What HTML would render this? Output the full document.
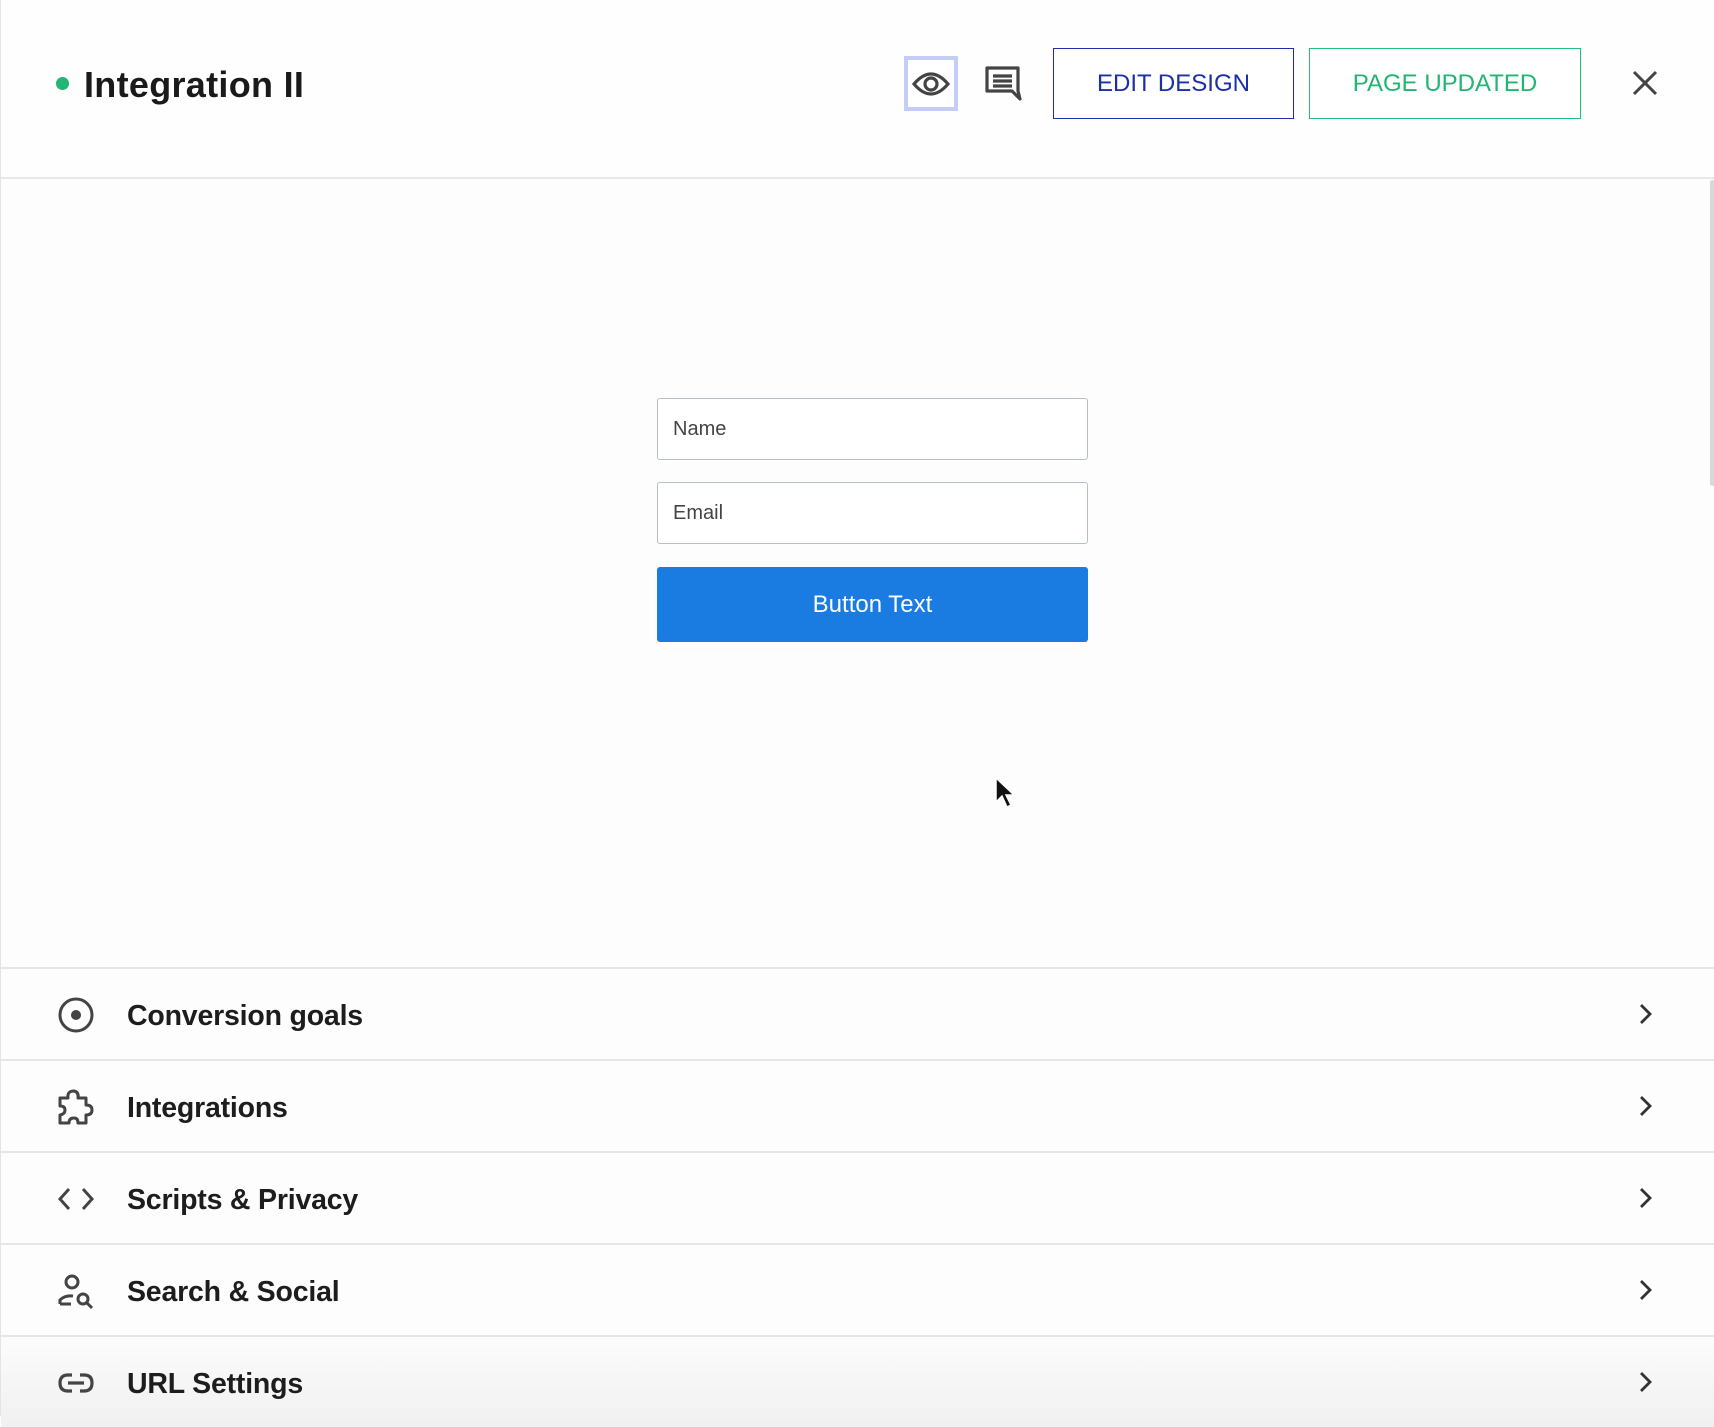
<!DOCTYPE html>
<html><head><meta charset="utf-8"><style>
*{margin:0;padding:0;box-sizing:border-box}
body{width:1714px;height:1416px;overflow:hidden;background:#fdfdfd;font-family:"Liberation Sans",sans-serif;position:relative;border-left:1px solid #e4e4e4}
.abs{position:absolute}
.hdr{left:0;top:0;width:1714px;height:179px;border-bottom:2px solid #e8e8e8;background:#fefefe}
.btn{position:absolute;top:48px;height:71px;border:1.5px solid;display:flex;align-items:center;justify-content:center;font-size:24px;background:#fff}
.inp{position:absolute;left:656px;width:431px;height:62px;border:1px solid #b8bec6;border-radius:3px;background:#fff;font-size:20px;color:#444;padding-left:15px;display:flex;align-items:center}
.row{position:absolute;left:0;width:1714px;height:92px;border-top:2px solid #e6e6e6}
.row .t{position:absolute;left:126px;top:31px;font-size:28.5px;font-weight:bold;color:#1d1d1d;letter-spacing:-0.2px}
.row svg.i{position:absolute;left:56px;top:27px}
.row svg.c{position:absolute;left:1634px;top:33px}
</style></head><body>
<div class="abs hdr"></div>
<div class="abs" style="left:55px;top:77px;width:13px;height:13px;border-radius:50%;background:#22b573"></div>
<div class="abs" style="left:83px;top:64px;font-size:36px;font-weight:bold;color:#1a1a1a;letter-spacing:0.3px">Integration II</div>
<div class="abs" style="left:903px;top:56px;width:54px;height:55px;border:4px solid #c3cdf6;background:#fff"></div>
<svg class="abs" style="left:910px;top:64px" width="40" height="40" viewBox="0 0 40 40"><path d="M3 20 Q20 0 37 20 Q20 40 3 20Z" fill="none" stroke="#444" stroke-width="3.2"/><circle cx="20" cy="20" r="6" fill="none" stroke="#444" stroke-width="3.2"/></svg>
<svg class="abs" style="left:983px;top:65px" width="38" height="38" viewBox="0 0 38 38"><path d="M3 3H34V26L36 34L28 26H3Z" fill="none" stroke="#444" stroke-width="3.2" stroke-linejoin="round"/><path d="M9 11H28M9 16H28M9 21H28" stroke="#444" stroke-width="3.2"/></svg>
<div class="btn" style="left:1052px;width:241px;border-color:#1c2fa8;color:#1c2fa8">EDIT DESIGN</div>
<div class="btn" style="left:1308px;width:272px;border-color:#22c07a;color:#22b573">PAGE UPDATED</div>
<svg class="abs" style="left:1630px;top:69px" width="28" height="28" viewBox="0 0 28 28"><path d="M3 3L25 25M25 3L3 25" stroke="#444" stroke-width="3"/></svg>
<div class="abs" style="left:1709px;top:180px;width:5px;height:306px;border-radius:3px;background:#d8d8d8"></div>
<div class="inp" style="top:398px">Name</div>
<div class="inp" style="top:482px">Email</div>
<div class="abs" style="left:656px;top:567px;width:431px;height:75px;background:#1a7be0;border-radius:3px;color:#fff;font-size:24px;display:flex;align-items:center;justify-content:center">Button Text</div>
<svg class="abs" style="left:993px;top:776px" width="22" height="34" viewBox="0 0 22 34"><path d="M2 2V26L8 20L13 31L17 29L12 19H20Z" fill="#111" stroke="#fff" stroke-width="1.5"/></svg>
<div class="row" style="top:967px"><svg class="i" width="38" height="38" viewBox="0 0 38 38"><circle cx="19" cy="19" r="16" fill="none" stroke="#444" stroke-width="3"/><circle cx="19" cy="19" r="5" fill="#444"/></svg><div class="t">Conversion goals</div><svg class="c" width="20" height="24" viewBox="0 0 20 24"><path d="M6 3L15 12L6 21" fill="none" stroke="#333" stroke-width="2.8"/></svg></div>
<div class="row" style="top:1059px"><svg class="i" width="38" height="38" viewBox="0 0 38 38"><path d="M3 10H11Q10 3 17 3Q22 4 21 10H29V17Q35 17 35 22Q35 27 29 27V35H21Q21 30 17 30Q12 30 12 35H3V27Q8 26 8 22Q8 18 3 18Z" fill="none" stroke="#444" stroke-width="3" stroke-linejoin="round"/></svg><div class="t">Integrations</div><svg class="c" width="20" height="24" viewBox="0 0 20 24"><path d="M6 3L15 12L6 21" fill="none" stroke="#333" stroke-width="2.8"/></svg></div>
<div class="row" style="top:1151px"><svg class="i" width="38" height="38" viewBox="0 0 38 38"><path d="M12 9L3 19L12 29M26 9L35 19L26 29" fill="none" stroke="#444" stroke-width="3"/></svg><div class="t">Scripts &amp; Privacy</div><svg class="c" width="20" height="24" viewBox="0 0 20 24"><path d="M6 3L15 12L6 21" fill="none" stroke="#333" stroke-width="2.8"/></svg></div>
<div class="row" style="top:1243px"><svg class="i" width="38" height="38" viewBox="0 0 38 38"><circle cx="15" cy="10" r="6" fill="none" stroke="#444" stroke-width="3"/><path d="M3 32V28Q8 23 16 24M3 32H14" fill="none" stroke="#444" stroke-width="3"/><circle cx="26" cy="27" r="5" fill="none" stroke="#444" stroke-width="3"/><path d="M30 31L35 36" stroke="#444" stroke-width="3"/></svg><div class="t">Search &amp; Social</div><svg class="c" width="20" height="24" viewBox="0 0 20 24"><path d="M6 3L15 12L6 21" fill="none" stroke="#333" stroke-width="2.8"/></svg></div>
<div class="row" style="top:1335px;background:linear-gradient(180deg,#fcfcfc,#f0f0f0)"><svg class="i" width="38" height="38" viewBox="0 0 38 38"><path d="M15 11H11Q3 11 3 19Q3 27 11 27H15M23 11H27Q35 11 35 19Q35 27 27 27H23M11 19H27" fill="none" stroke="#444" stroke-width="3.2"/></svg><div class="t">URL Settings</div><svg class="c" width="20" height="24" viewBox="0 0 20 24"><path d="M6 3L15 12L6 21" fill="none" stroke="#333" stroke-width="2.8"/></svg></div>
</body></html>
